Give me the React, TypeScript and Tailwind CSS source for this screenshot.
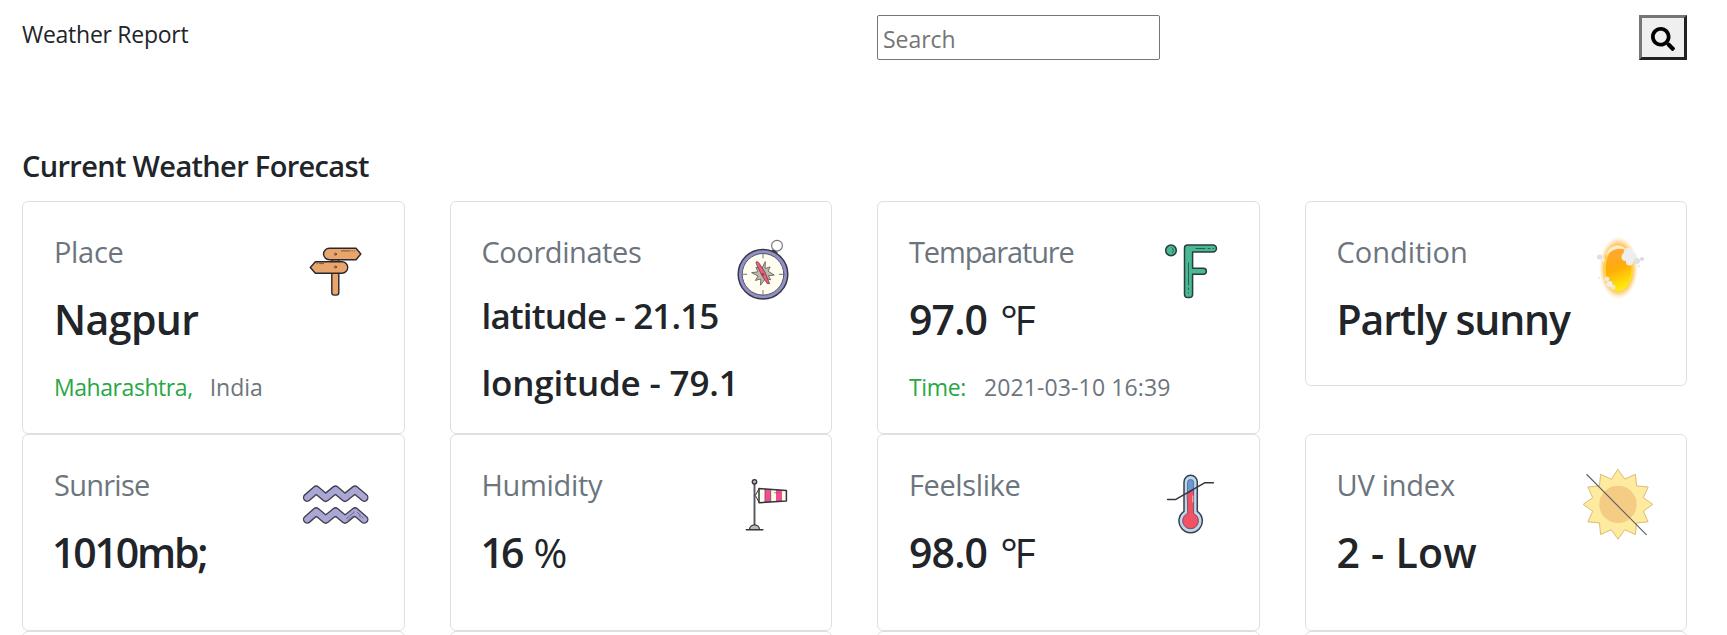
import type { ReactNode } from "react";
import { FaSearch } from "react-icons/fa";

const ink = "#34333f";

function Icon({ children }: { children: ReactNode }) {
  return (
    <svg viewBox="0 0 72 72" className="mt-[2px] h-[72px] w-[72px] shrink-0" fill="none" strokeLinecap="round" strokeLinejoin="round">
      {children}
    </svg>
  );
}

function SignpostIcon() {
  return (
    <Icon>
      <g fill="#e9a56b" stroke="#29282f" strokeWidth="1.4">
        <path d="M31.8 22h7v5h-7z" />
        <path d="M31.8 36h7v20.5a2.6 2.6 0 0 1-2.6 2.6h-1.8a2.6 2.6 0 0 1-2.6-2.6z" />
        <path d="M29.3 12.2H56l4.8 5.8-4.8 5.7H29.3a5.7 5.7 0 0 1 0-11.5z" />
        <path d="M42 25.7H15.4L10.3 31.5l5.1 5.7H42a5.7 5.7 0 0 0 0-11.5z" />
      </g>
      <g stroke="#5a432f" strokeWidth="1">
        <circle cx="35.5" cy="18.2" r="1" />
        <circle cx="35.5" cy="31" r="1" />
        <path d="M41.5 14.9h8.5M52 14.9h.5M54.5 14.9h.3M19.5 27.6h4M17 27.6h.3" strokeWidth=".8" />
      </g>
    </Icon>
  );
}

function CompassIcon() {
  return (
    <Icon>
      <circle cx="50" cy="9.7" r="5.4" stroke="#77767d" strokeWidth="1.2" />
      <path d="M44.5 16.5l1.4-2.2 4 2.2-1.2 3.2z" fill="#59618f" stroke={ink} strokeWidth="1.1" />
      <circle cx="36" cy="38.3" r="24.8" fill="#9090c2" stroke="#38374a" strokeWidth="1.5" />
      <circle cx="36" cy="38.3" r="20.8" fill="#fffef1" stroke="#55546a" strokeWidth="1" />
      <path d="M36 18v4M36 54.5v4M15.8 38.3h4M52.3 38.3h4" stroke="#77767a" strokeWidth="1" />
      <path d="M38.3 26l-.2 6.5 5-1.6-2 4.3 6.2 3.9-6 .6 2.5 4.1-5.3-1.2-5 6.6.3-6.2-5.4 1.4 2.7-4.4-6.5-3.3 6.3-.9-2-4.6 5.2 1.8z" fill="#bcbbae" stroke="#65645f" strokeWidth=".9" />
      <path d="M29.4 25.8c1.3-.6 2.4.5 3 1.8l5.900 9.200 4.300 11-2.500-.4-5.300-8-5.500-11.700z" fill="#ef5d7d" stroke="#6b3a4b" strokeWidth=".8" />
      <path d="M36 36.8l1.5 1.6-1.6 1.6-1.5-1.6z" fill="#7c3e50" />
    </Icon>
  );
}

function FahrenheitIcon() {
  return (
    <Icon>
      <g fill="#4bb795" stroke="#253f3c" strokeWidth="1.5">
        <circle cx="16" cy="14.4" r="5.3" />
        <path d="M32.5 9.1H58a3.4 3.4 0 0 1 0 6.9H37.6v16.3h10.8a2.9 2.9 0 0 1 0 5.9H37.6v20a3.3 3.3 0 0 1-3.3 3.3h-1.5a3.3 3.3 0 0 1-3.3-3.3V12a3 3 0 0 1 3-2.9z" />
      </g>
      <path d="M17 11.8a3 3 0 0 1 .3 5M41 12.5h9M53 12.5h2M58 12.5h.5M33.5 27v22M33.5 52v1.5M33.5 56.5v.3" stroke="#206451" strokeWidth="1" />
    </Icon>
  );
}

function PartlySunnyIcon() {
  return (
    <Icon>
      <defs>
        <radialGradient id="glow">
          <stop offset="68%" stopColor="#ffb233" />
          <stop offset="84%" stopColor="#ffca70" stopOpacity=".6" />
          <stop offset="100%" stopColor="#ffe2ae" stopOpacity="0" />
        </radialGradient>
        <linearGradient id="disc" x1=".35" y1="0" x2=".6" y2="1">
          <stop offset="0" stopColor="#ffa63d" />
          <stop offset=".5" stopColor="#ffad08" />
          <stop offset="1" stopColor="#fff30b" />
        </linearGradient>
        <filter id="soft" x="-50%" y="-50%" width="200%" height="200%">
          <feGaussianBlur stdDeviation=".7" />
        </filter>
      </defs>
      <ellipse cx="36.5" cy="32" rx="19.5" ry="31.5" fill="url(#glow)" />
      <ellipse cx="36.6" cy="32.5" rx="13.6" ry="22.3" fill="url(#disc)" stroke="#ffe42b" strokeWidth="1.2" />
      <path d="M24 20C26 12 31 9.5 36 9.5c4 0 7 2 9 5-6-3-14-3-21 5.5z" fill="#fff4e0" opacity=".85" filter="url(#soft)" />
      <g filter="url(#soft)" fill="#eeeeef">
        <circle cx="46.5" cy="17" r="5" />
        <circle cx="43.5" cy="21" r="4" />
        <circle cx="50.5" cy="21" r="4.5" />
        <circle cx="47.5" cy="26" r="3.6" />
        <circle cx="55" cy="25" r="3" fill="#e0e0e3" />
        <circle cx="60" cy="23" r="2" fill="#dadadc" />
        <circle cx="57" cy="30" r="1.6" />
        <circle cx="17.5" cy="21" r="2.6" fill="#e0e0e2" />
        <circle cx="21" cy="24" r="2" />
        <circle cx="25" cy="43" r="2.3" />
        <circle cx="27.5" cy="48" r="3" />
        <circle cx="31" cy="51" r="2.5" opacity=".8" />
        <circle cx="17" cy="42" r="1.2" />
      </g>
    </Icon>
  );
}

function WavesIcon() {
  const upper = "M7.2 28.6L16.2 20.7L25.7 28.7L35.5 20.7L45 28.7L55 20.7L64.2 28.6";
  const lower = "M7.2 50.4L16.2 42.5L25.7 50.5L35.5 42.5L45 50.5L55 42.5L64.2 50.4";
  return (
    <Icon>
      {[upper, lower].map((d) => (
        <g key={d}>
          <path d={d} stroke="#413f4d" strokeWidth="8.6" />
          <path d={d} stroke="#aaa6d6" strokeWidth="5.9" />
        </g>
      ))}
      <path d="M46.5 49.5l8-6.6M48 51.2l5-4M57.5 43.5l3 2.6M62 48l1 .8M59 46.5l1.5 1.3" stroke="#5c5976" strokeWidth=".8" />
    </Icon>
  );
}

function WindsockIcon() {
  return (
    <Icon>
      <path d="M27.5 15.5V56" stroke="#57565f" strokeWidth="1.9" />
      <circle cx="27.5" cy="12.8" r="2.2" fill="#bdb9b2" stroke={ink} strokeWidth="1.4" />
      <path d="M22.5 60.5a5 4.7 0 0 1 10 0z" fill="#c0bbb0" stroke={ink} strokeWidth="1.2" />
      <path d="M19.3 60.7h16.6" stroke={ink} strokeWidth="1.5" />
      <path d="M32 19.7l-3.7 6.8 3.7 6.7" stroke={ink} strokeWidth="1" />
      <path d="M32 19.6l27.4 2V32L32 33.7z" fill="#fffbe9" />
      <path d="M38 20l5.7.4v12.5l-5.7.4zM49 20.8l6 .5v11l-6 .4z" fill="#f04e8c" />
      <path d="M38 20v13.3M43.7 20.4v12.5" stroke="#77475c" strokeWidth=".8" />
      <path d="M32 19.6l27.4 2V32L32 33.7z" stroke={ink} strokeWidth="1.5" />
      <path d="M47.5 23.8h3M52.5 24h.5" stroke="#8d6070" strokeWidth=".8" />
    </Icon>
  );
}

function ThermometerIcon() {
  return (
    <Icon>
      <path d="M29 13a6.5 6.5 0 0 1 13.3 0v29.3a11.7 11.7 0 1 1-13.3 0z" fill="#bcd8ef" stroke="#37404c" strokeWidth="1.5" />
      <path d="M32.5 23.5V13.6a3 3 0 0 1 6.1 0v7z" fill="#6e98d1" stroke="#526d93" strokeWidth=".9" />
      <path d="M32.5 24.5l6.1-3.6v23.7a7.9 7.9 0 1 1-6.1 0z" fill="#ef5365" stroke="#8c4a5c" strokeWidth="1" />
      <path d="M37.8 27v6" stroke="#f6c2cb" strokeWidth="1" />
      <path d="M12.6 30.4h8.2L50 13.7h8.4" stroke="#34353d" strokeWidth="1.5" />
    </Icon>
  );
}

function UvIcon() {
  const rays = Array.from({ length: 24 }, (_, i) => {
    const r = i % 2 ? 26.2 : 34.8;
    const a = (i * Math.PI) / 12;
    return `${(36 + r * Math.sin(a)).toFixed(2)},${(35.4 - r * Math.cos(a)).toFixed(2)}`;
  }).join(" ");
  return (
    <Icon>
      <polygon points={rays} fill="#ffeb9f" stroke="#d8bd74" strokeWidth="1" strokeLinejoin="miter" />
      <circle cx="36" cy="35.4" r="18.7" fill="#f5cc83" />
      <path d="M4.8 5.5L64.3 65.7" stroke="#5b6064" strokeWidth="1.1" />
    </Icon>
  );
}

interface CardProps {
  label: string;
  tracking: string;
  icon: ReactNode;
  children: ReactNode;
  className?: string;
}

function Card({ label, tracking, icon, children, className = "" }: CardProps) {
  return (
    <section className={`flex justify-between rounded-md border border-[#dfdfdf] bg-white pt-8 pr-8 pl-[31px] ${className}`}>
      <div className="whitespace-nowrap">
        <h2 className={`mb-6 text-[29px] leading-9 text-[#6c757d] ${tracking}`}>{label}</h2>
        {children}
      </div>
      <div className="-ml-20 shrink-0">{icon}</div>
    </section>
  );
}

function Value({ children, className }: { children: ReactNode; className: string }) {
  return <p className={`text-[41px] leading-[51px] font-semibold ${className}`}>{children}</p>;
}

export default function App() {
  return (
    <main className="h-screen overflow-hidden bg-white pr-10 pl-[22px] font-['Open_Sans','Noto_Sans',sans-serif] text-[#212529]">
      <header className="grid h-[148px] grid-cols-2 items-start gap-x-[45px] pt-[15px]">
        <div className="pt-px text-[23px] leading-9 tracking-[-0.27px]">Weather Report</div>
        <div className="flex justify-between">
          <input
            type="text"
            placeholder="Search"
            className="h-[45px] w-[283px] rounded-[2px] border border-[#767676] px-[5px] pt-[3px] text-[23px] tracking-[-0.05px] placeholder:text-[#757575]"
          />
          <button
            type="button"
            aria-label="Search"
            className="flex h-[45px] w-12 items-center justify-center border-3 border-t-[#767676] border-r-[#212121] border-b-[#212121] border-l-[#767676] bg-[#efefef] pt-[2px] text-2xl text-black"
          >
            <FaSearch />
          </button>
        </div>
      </header>

      <h1 className="mb-[17px] text-[29px] leading-9 font-semibold tracking-[-0.67px]">Current Weather Forecast</h1>

      <div className="grid grid-cols-4 grid-rows-[233px_197px_197px] gap-x-[45px]">
        <Card label="Place" tracking="tracking-[-0.33px]" icon={<SignpostIcon />}>
          <Value className="tracking-[-0.57px]">Nagpur</Value>
          <p className="mt-6 flex gap-[17px] text-[23px] leading-9">
            <span className="tracking-[-0.44px] text-[#28a745]">Maharashtra,</span>
            <span className="text-[#6c757d]">India</span>
          </p>
        </Card>
        <Card label="Coordinates" tracking="tracking-[-0.42px]" icon={<CompassIcon />}>
          <p className="text-[35px] leading-[44px] font-semibold tracking-[-0.86px]">latitude - 21.15</p>
          <p className="mt-[23px] text-[35px] leading-[44px] font-semibold tracking-[-0.16px]">longitude - 79.1</p>
        </Card>
        <Card label="Temparature" tracking="tracking-[-1.14px]" icon={<FahrenheitIcon />}>
          <Value className="flex gap-[13px] tracking-[-0.85px]">
            <span>97.0</span>
            <span className="font-normal tracking-[-3.2px]">°F</span>
          </Value>
          <p className="mt-6 flex gap-[18px] text-[23px] leading-9">
            <span className="tracking-[-0.37px] text-[#28a745]">Time:</span>
            <span className="tracking-[0.13px] text-[#6c757d]">2021-03-10 16:39</span>
          </p>
        </Card>
        <Card label="Condition" tracking="tracking-[-0.02px]" icon={<PartlySunnyIcon />} className="h-[185px]">
          <Value className="tracking-[-1.14px]">Partly sunny</Value>
        </Card>

        <Card label="Sunrise" tracking="tracking-[-0.74px]" icon={<WavesIcon />}>
          <Value className="-ml-[2px] tracking-[-2.2px]">1010mb;</Value>
        </Card>
        <Card label="Humidity" tracking="tracking-[-0.33px]" icon={<WindsockIcon />}>
          <Value className="-ml-px flex gap-3 tracking-[-3px]">
            <span>16</span>
            <span className="font-normal">%</span>
          </Value>
        </Card>
        <Card label="Feelslike" tracking="tracking-[-0.39px]" icon={<ThermometerIcon />}>
          <Value className="flex gap-[13px] tracking-[-0.85px]">
            <span>98.0</span>
            <span className="font-normal tracking-[-3.2px]">°F</span>
          </Value>
        </Card>
        <Card label="UV index" tracking="tracking-[-0.24px]" icon={<UvIcon />}>
          <Value className="tracking-[0.26px]">2 - Low</Value>
        </Card>

        {["a", "b", "c", "d"].map((id) => (
          <section key={id} className="rounded-md border border-[#dfdfdf] bg-white" />
        ))}
      </div>
    </main>
  );
}
